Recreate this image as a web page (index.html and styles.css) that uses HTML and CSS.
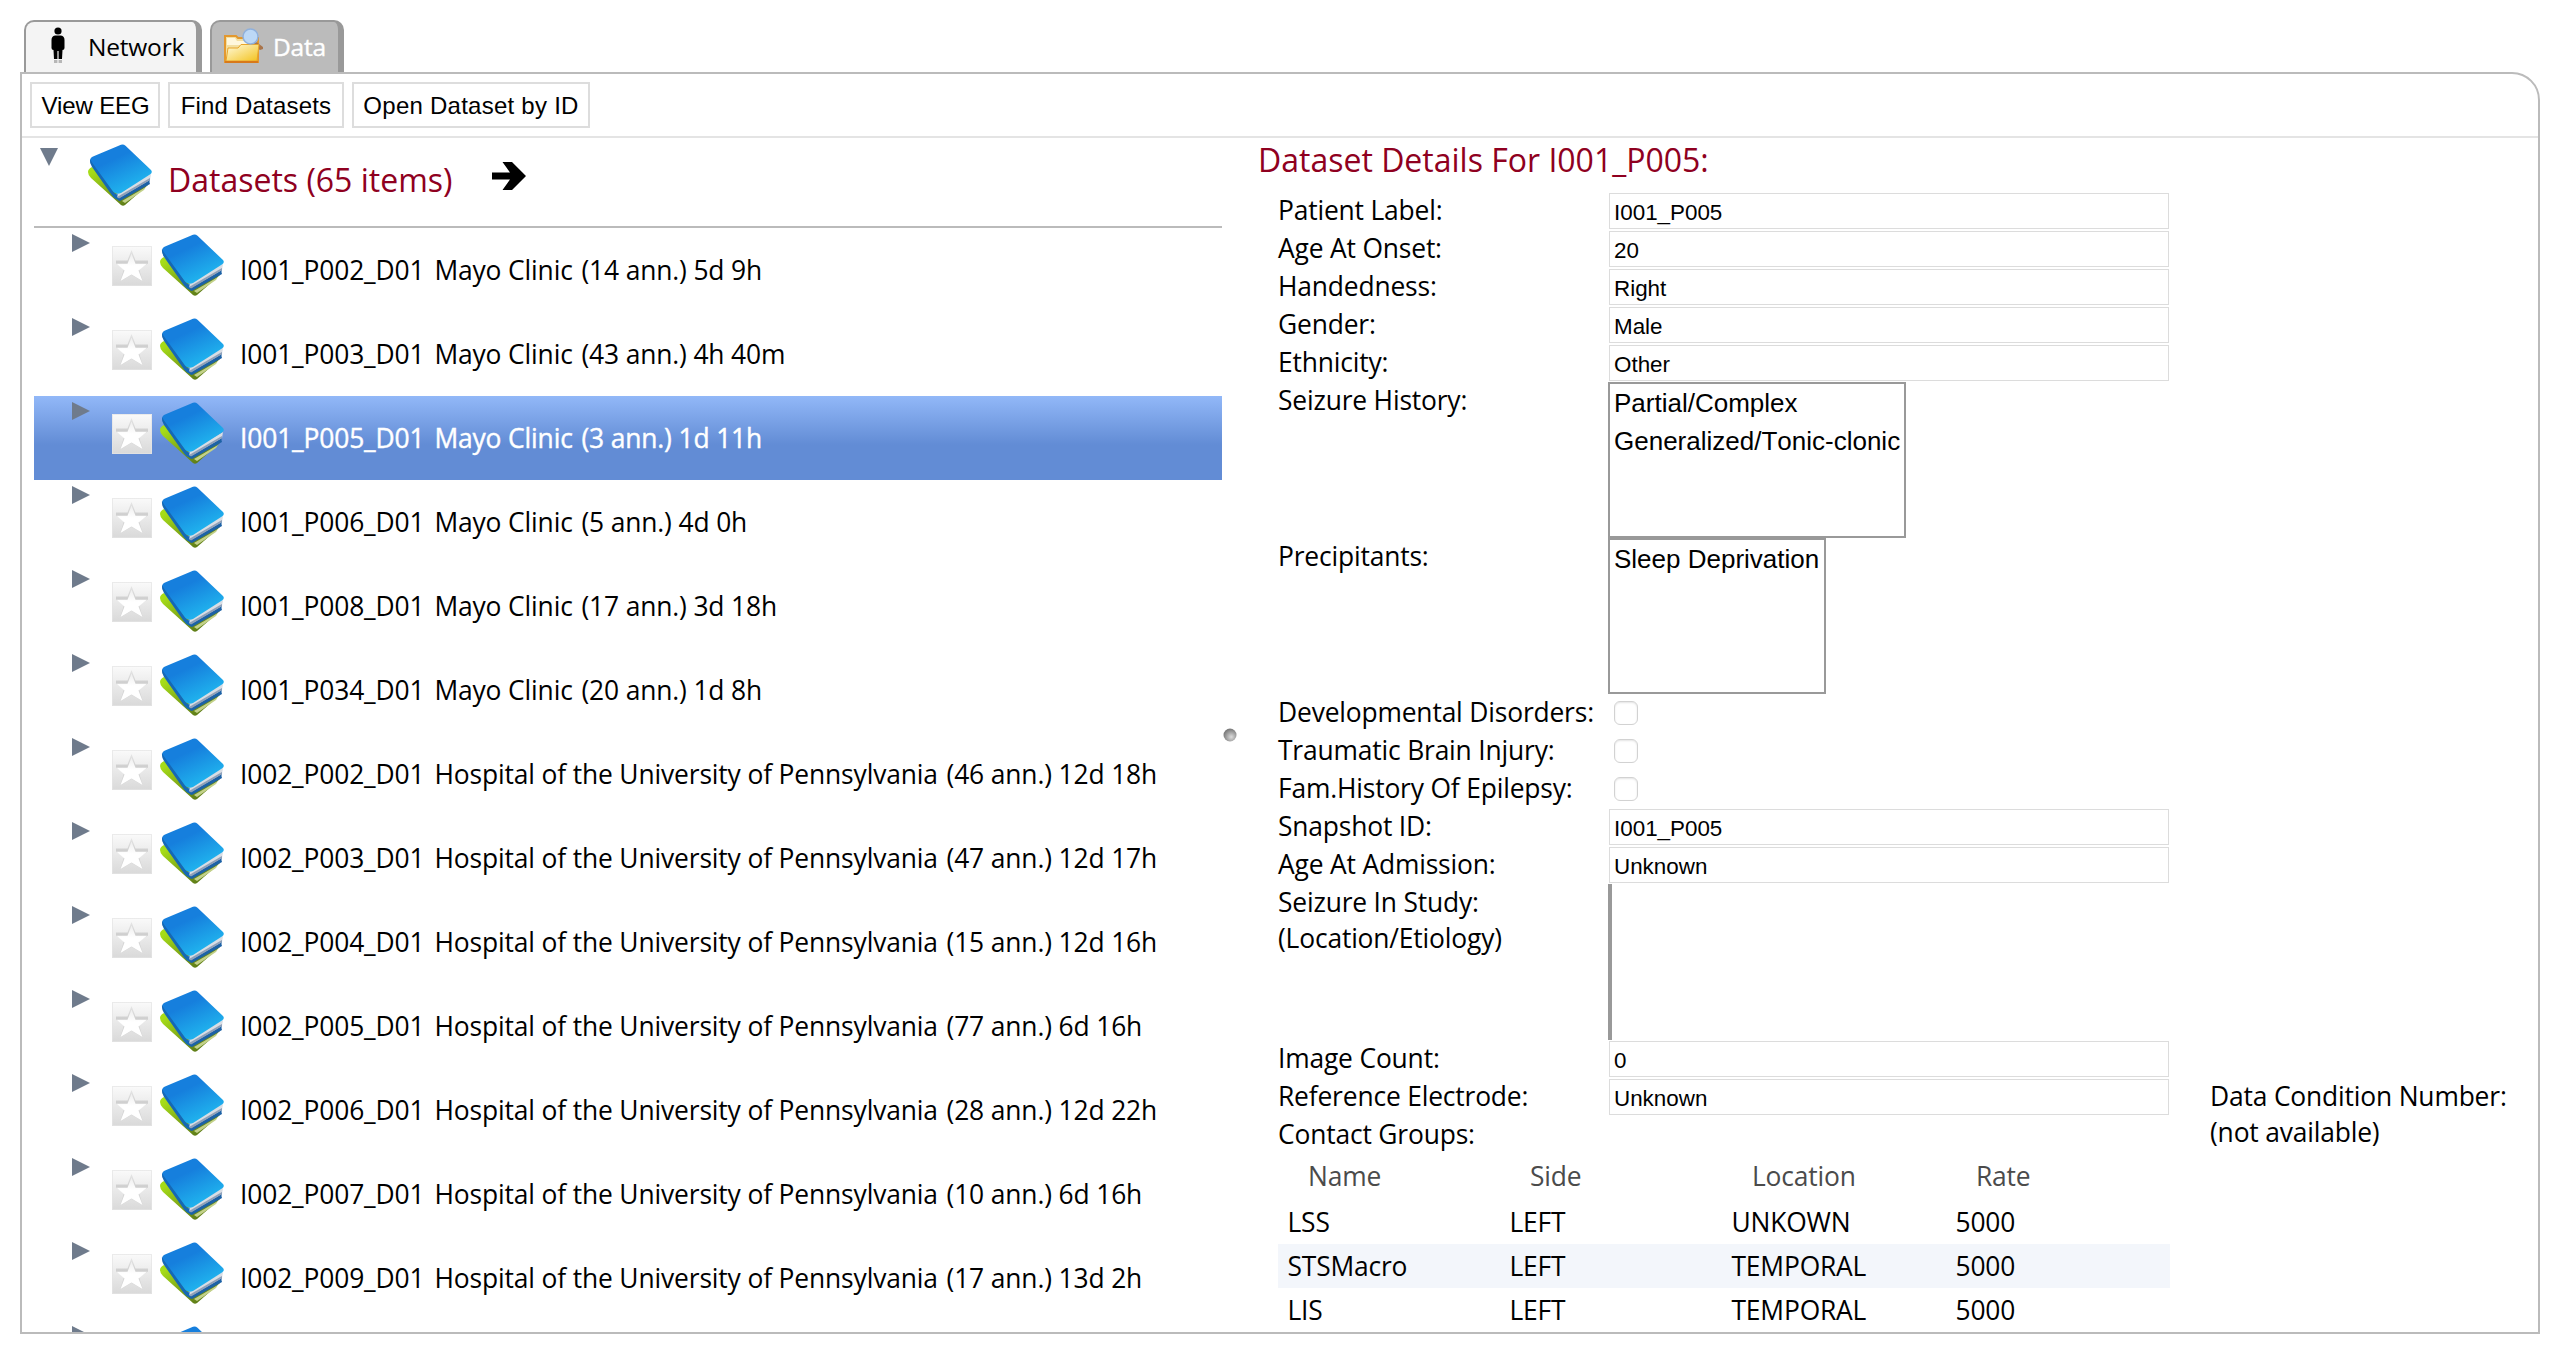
FILE: index.html
```html
<!DOCTYPE html>
<html lang="en">
<head>
<meta charset="utf-8">
<title>Datasets</title>
<link rel="stylesheet" href="styles.css">
</head>
<body>
<svg width="0" height="0" class="defs" aria-hidden="true">
  <defs>
    <linearGradient id="cover" x1="0.2" y1="0" x2="0.8" y2="1"><stop offset="0.3" stop-color="#167fdd"/><stop offset="1" stop-color="#22c0f2"/></linearGradient>
    <linearGradient id="green" x1="0" y1="0" x2="1" y2="1"><stop offset="0.1" stop-color="#a6dc18"/><stop offset="0.8" stop-color="#5f7d18"/></linearGradient>
    <linearGradient id="tile" x1="0" y1="0" x2="0" y2="1"><stop offset="0" stop-color="#fafafa"/><stop offset="1" stop-color="#d9d9d9"/></linearGradient>
    <linearGradient id="starline" x1="0" y1="0" x2="0" y2="1"><stop offset="0" stop-color="#e6e6e6"/><stop offset="0.4" stop-color="#cfcfcf"/><stop offset="1" stop-color="#d6d6d6"/></linearGradient>
    <linearGradient id="starfill" x1="0" y1="0" x2="0" y2="1"><stop offset="0" stop-color="#ededed"/><stop offset="0.45" stop-color="#fff"/></linearGradient>
    <linearGradient id="gold" x1="0" y1="0" x2="1" y2="1"><stop offset="0" stop-color="#fffbe0"/><stop offset="1" stop-color="#f3c21c"/></linearGradient>
    <radialGradient id="knob" cx="0.6" cy="0.65" r="0.6"><stop offset="0" stop-color="#dcdcdc"/><stop offset="1" stop-color="#7c7c7c"/></radialGradient>
    <symbol id="books" viewBox="0 0 64 62">
      <path d="M0 28Q0 25 4 23L26 44L60 41L37 61Q35 62.500 33 61L3 34Q0 31 0 28Z" fill="url(#green)"/>
      <path d="M34 57L58 43L56 46L37 59Z" fill="#c3d18a"/>
      <path d="M28 50L62 35Q61 38 62 40L32 57Q28 57 28 50Z" fill="#1d62a6"/>
      <path d="M28 50L63 30L62 36L31 54Q28 54 28 50Z" fill="#d9dde4"/>
      <path d="M29 53L62 34L62 36L31 54.500Z" fill="#8fa0b8"/>
      <path d="M2 17Q2 13.500 5 12.500L33 0.800Q35.500 0 37.500 1.800L63 26Q65 28.500 62 30.500L33 49Q29 51 25 48L3 20Z" fill="url(#cover)"/>
      <path d="M2 15Q1.500 19 4 23L23 50Q27 56 31 55.500Q28 53 30 50.500Q27 50.500 25 47.500L4 18.500Z" fill="#1668b4"/>
    </symbol>
    <symbol id="star" viewBox="0 0 40 40">
      <rect width="40" height="40" fill="url(#tile)"/>
      <rect x="0.5" y="0.5" width="39" height="39" fill="none" stroke="#e4e4e4" stroke-opacity="0.7"/>
      <path d="M19.500 4L23.500 14.500H36V17.500L27 23L31 35.500L19.500 29L8 35.500L12 23L4 17.500V14.500H15.500Z" fill="url(#starline)"/>
      <path d="M19.500 7.500L23.500 17.800H35L26.500 24.500L30.500 35L19.500 28.500L8.500 35L12.500 24.500L4.500 17.800H15.500Z" fill="url(#starfill)"/>
    </symbol>
    <symbol id="tri" viewBox="0 0 18 18"><path d="M0 0L18 9L0 18Z" fill="#6f7b8c"/></symbol>
  </defs>
</svg>

<div class="app">
  <nav class="tabs">
    <div class="tab tab-network">
      <svg class="person" viewBox="0 0 16 38"><circle cx="8" cy="4" r="3.600"/><path d="M5 8.500H11Q14.500 9 14.500 13V21Q14.500 23 12.500 23L12 32H8.600V24H7.400V32H4L3.500 23Q1.500 23 1.500 21V13Q1.500 9 5 8.500Z"/><path d="M4 33H7.400V36H4ZM8.600 33H12V36H8.600Z" opacity="0.250"/></svg>
      <span>Network</span>
    </div>
    <div class="tab tab-data">
      <svg class="folder" viewBox="0 0 40 36"><path d="M1 8H12L14 10H34V34H1Z" fill="#f3dfa0" stroke="#e3982f" stroke-width="2"/><path d="M3 10H11L13 13H32V17H3Z" fill="#fff7dc"/><path d="M31 13L39 19V21L36 22L29 18Z" fill="#a9744a"/><path d="M4 20H14L17 16.500H35L33 33H2Z" fill="url(#gold)" stroke="#e8a52a"/><circle cx="26.500" cy="8.500" r="7.500" fill="#bcd8f6" stroke="#8fb0dc" stroke-width="1.500"/><path d="M1 34H34" stroke="#d8791a" stroke-width="2"/></svg>
      <span>Data</span>
    </div>
  </nav>

  <section class="panel">
    <div class="toolbar">
      <button class="btn btn-view">View EEG</button>
      <button class="btn btn-find">Find Datasets</button>
      <button class="btn btn-open">Open Dataset by ID</button>
    </div>
    <div class="split">
      <div class="tree">
        <header class="tree-head">
          <svg class="tri tri-open"><use href="#tri"/></svg>
          <svg class="books"><use href="#books"/></svg>
          <h1 class="title">Datasets (65 items)</h1>
          <svg class="go" viewBox="0 0 34 28"><path d="M0 10.500H18L10.500 0H20L34 14L20 28H10.500L18 17.500H0Z"/></svg>
        </header>
        <ul class="rows" id="rows"></ul>
      </div>
      <div class="splitter"><svg class="knob" viewBox="0 0 14 14"><circle cx="7" cy="7" r="6.500" fill="url(#knob)"/></svg></div>
      <div class="details">
        <h2 class="title">Dataset Details For I001_P005:</h2>
        <div class="detail-body">
          <div class="form">
            <label>Patient Label:</label><div class="field">I001_P005</div>
            <label>Age At Onset:</label><div class="field">20</div>
            <label>Handedness:</label><div class="field">Right</div>
            <label>Gender:</label><div class="field">Male</div>
            <label>Ethnicity:</label><div class="field">Other</div>
            <label>Seizure History:</label><div class="list list-history"><div>Partial/Complex</div><div>Generalized/Tonic-clonic</div></div>
            <label>Precipitants:</label><div class="list list-precip"><div>Sleep Deprivation</div></div>
            <label>Developmental Disorders:</label><div class="check"></div>
            <label>Traumatic Brain Injury:</label><div class="check"></div>
            <label>Fam.History Of Epilepsy:</label><div class="check"></div>
            <label>Snapshot ID:</label><div class="field">I001_P005</div>
            <label>Age At Admission:</label><div class="field">Unknown</div>
            <label>Seizure In Study:<br>(Location/Etiology)</label><div class="list list-empty"></div>
            <label>Image Count:</label><div class="field">0</div>
            <label>Reference Electrode:</label><div class="field">Unknown</div>
            <label>Contact Groups:</label><div class="blank"></div>
            <table class="contacts">
              <thead><tr><th>Name</th><th>Side</th><th>Location</th><th>Rate</th></tr></thead>
              <tbody>
                <tr><td>LSS</td><td>LEFT</td><td>UNKOWN</td><td>5000</td></tr>
                <tr><td>STSMacro</td><td>LEFT</td><td>TEMPORAL</td><td>5000</td></tr>
                <tr><td>LIS</td><td>LEFT</td><td>TEMPORAL</td><td>5000</td></tr>
              </tbody>
            </table>
          </div>
          <p class="condition">Data Condition Number:<br>(not available)</p>
        </div>
      </div>
    </div>
  </section>
</div>
<script src="rows.js"></script>
</body>
</html>
```
FILE: rows.js
```js
const mayo = 'Mayo Clinic';
const penn = 'Hospital of the University of Pennsylvania';
const datasets = [
  ['I001_P002_D01', mayo, '(14 ann.) 5d 9h'],
  ['I001_P003_D01', mayo, '(43 ann.) 4h 40m'],
  ['I001_P005_D01', mayo, '(3 ann.) 1d 11h'],
  ['I001_P006_D01', mayo, '(5 ann.) 4d 0h'],
  ['I001_P008_D01', mayo, '(17 ann.) 3d 18h'],
  ['I001_P034_D01', mayo, '(20 ann.) 1d 8h'],
  ['I002_P002_D01', penn, '(46 ann.) 12d 18h'],
  ['I002_P003_D01', penn, '(47 ann.) 12d 17h'],
  ['I002_P004_D01', penn, '(15 ann.) 12d 16h'],
  ['I002_P005_D01', penn, '(77 ann.) 6d 16h'],
  ['I002_P006_D01', penn, '(28 ann.) 12d 22h'],
  ['I002_P007_D01', penn, '(10 ann.) 6d 16h'],
  ['I002_P009_D01', penn, '(17 ann.) 13d 2h'],
  ['', '', '']
];
document.getElementById('rows').innerHTML = datasets.map(([id, site, info]) => `
  <li class="row${id === 'I001_P005_D01' ? ' selected' : ''}">
    <svg class="tri"><use href="#tri"/></svg>
    <svg class="star"><use href="#star"/></svg>
    <svg class="books"><use href="#books"/></svg>
    <span class="name"><span class="id">${id}</span>${site} <span class="info">${info}</span></span>
  </li>`).join('');
```
FILE: styles.css
```css
* { box-sizing: border-box; }
html, body { height: 100%; }
body { margin: 0; overflow: hidden; background: #fff; color: #000; font: 26.4px/36px "Open Sans", sans-serif; letter-spacing: -0.17px; }
.defs { display: block; }
svg { display: block; flex: none; }
.app { display: flex; flex-direction: column; height: 1334px; width: 2540px; padding: 20px 0 0 20px; }

.tabs { display: flex; gap: 8px; height: 52px; flex: none; padding-left: 4px; }
.tab { display: flex; align-items: center; height: 52px; border: 2px solid #999; border-right-width: 6px; border-bottom: 0; border-radius: 10px 10px 0 0; font-size: 24.5px; letter-spacing: -0.2px; }
.tab-network { width: 178px; background: #f4f4f4; padding: 0 0 2px 24px; }
.tab span { padding-top: 2px; }
.tab-network span { margin-left: 22px; }
.tab-data { width: 134px; background: #bbb; color: #fff; padding: 0 0 2px 12px; }
.tab-data span { margin-left: 9px; -webkit-text-stroke: 0.4px #fff; }
.person { width: 16px; height: 38px; }
.folder { width: 40px; height: 36px; }

.panel { flex: 1; min-height: 0; display: flex; flex-direction: column; border: 2px solid #bbb; border-top-right-radius: 28px; overflow: hidden; }
.toolbar { display: flex; gap: 8px; height: 64px; flex: none; padding: 8px; border-bottom: 2px solid #e4e4e4; }
.btn { height: 46px; padding: 1px 0 0; background: #fff; border: 2px solid #ddd; font: 24px "Liberation Sans", sans-serif; color: #000; white-space: nowrap; }
.btn-view { width: 130px; padding-left: 1px; letter-spacing: -0.1px; }
.btn-find { width: 176px; letter-spacing: 0.2px; }
.btn-open { width: 238px; letter-spacing: 0.25px; }

.split { flex: 1; min-height: 0; display: flex; }
.tree { width: 1200px; padding-left: 12px; overflow: hidden; }
.tree-head { display: flex; height: 90px; border-bottom: 2px solid #bbb; padding: 6px 0 0 6px; }
.title { margin: 0; font-size: 32px; line-height: 44px; font-weight: 400; letter-spacing: 0; color: #8f0020; white-space: nowrap; }
.tri { width: 18px; height: 18px; }
.tri-open { transform: rotate(90deg); margin-top: 4px; }
.books { width: 64px; height: 62px; }
.tree-head .books { margin-left: 30px; }
.tree-head .title { margin: 14px 0 0 16px; width: 324px; }
.go { width: 34px; height: 28px; margin-top: 18px; }
.rows { list-style: none; margin: 0; padding: 0; }
.row { display: flex; height: 84px; padding: 6px 0 0 38px; white-space: pre; }
.row .star { width: 40px; height: 40px; margin: 12px 8px 0 22px; }
.name { margin: 18px 0 0 16px; letter-spacing: -0.14px; }
.id { margin-right: 10px; }
.info { margin-left: 2px; }
.selected { color: #fff; background: linear-gradient(#92b8f8, #628cd5 58%, #628cd5); }
.selected .name { -webkit-text-stroke: 0.4px #fff; }

.splitter { width: 16px; display: flex; align-items: center; justify-content: center; }
.knob { width: 14px; height: 14px; }
.details { flex: 1; padding-left: 20px; }
.details .title { height: 54px; }
.detail-body { display: flex; padding-left: 20px; gap: 40px; }
.form { width: 892px; flex: none; display: grid; grid-template-columns: 330px 562px; }
label { display: block; white-space: nowrap; }
.field { height: 36px; margin: 1px; padding: 1px 0 0 4px; border: 1px solid #dcdcdc; font: 22.4px/35px "Liberation Sans", sans-serif; letter-spacing: 0; }
.list { height: 156px; border: 2px solid #999; padding: 0 0 0 4px; font: 26px/38px "Liberation Sans", sans-serif; letter-spacing: 0; white-space: nowrap; }
.list-history { width: 298px; font-kerning: none; }
.list-precip { width: 218px; }
.list-empty { width: 4px; padding: 0; background: #999; }
.check { width: 24px; height: 24px; margin: 7px 0 7px 6px; border: 1px solid #d2d2d2; border-radius: 6px; box-shadow: inset 0 1px 2px #e4e4e4; }
.blank { height: 38px; }
.contacts { grid-column: 1 / 3; width: 892px; table-layout: fixed; border-collapse: collapse; }
.contacts th { width: 222px; height: 46px; padding: 0 0 2px 30px; text-align: left; font-weight: 400; color: #4b4b4b; }
.contacts th:nth-child(3) { width: 224px; }
.contacts th:nth-child(4) { width: 224px; }
.contacts td { height: 44px; padding: 0 0 0 9.5px; }
.contacts tbody tr:nth-child(2) { background: #f3f6fb; }
.condition { margin: 886px 0 0; white-space: nowrap; }
```
